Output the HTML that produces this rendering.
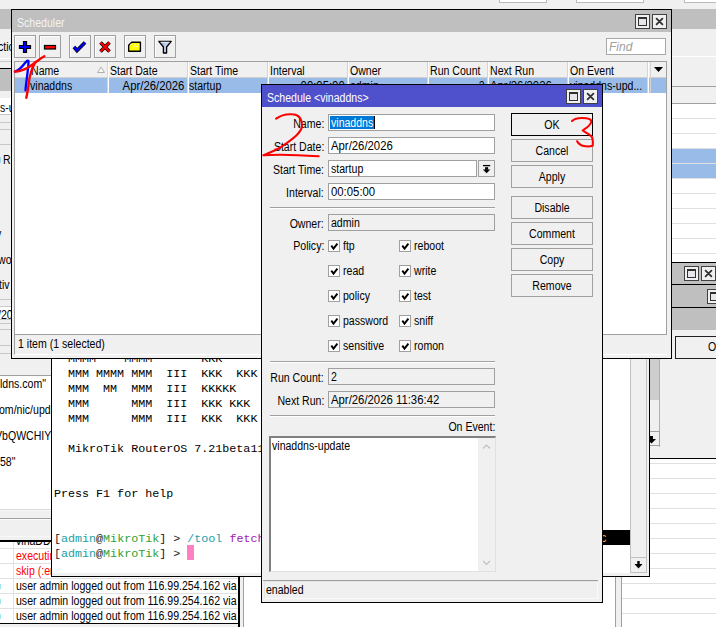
<!DOCTYPE html>
<html><head><meta charset="utf-8">
<style>
*{margin:0;padding:0;box-sizing:border-box}
html,body{width:716px;height:627px;overflow:hidden;background:#f0f0f0;font-family:"Liberation Sans",sans-serif;font-size:12px;color:#000}
.a{position:absolute}
.t{position:absolute;white-space:nowrap;line-height:14px;transform:scaleX(.88);transform-origin:0 0}
.tr{position:absolute;white-space:nowrap;line-height:14px;transform:scaleX(.88);transform-origin:100% 0;text-align:right}
.n{transform:scaleX(.945)!important}
.tc{position:absolute;white-space:nowrap;line-height:14px;transform:scaleX(.88);transform-origin:50% 0;text-align:center}
.win{position:absolute;border:1px solid #000;background:#f0f0f0}
.tb{position:absolute;background:#bfbfbf}
.tbtn{position:absolute;border:1px solid #a0a0a0;background:#f0f0f0;box-shadow:inset 1px 1px 0 #fff}
.fld{position:absolute;border:1px solid #a0a0a0;background:#fff}
.hsep{position:absolute;width:2px;border-left:1px solid #d5d5d5;border-right:1px solid #fff}
.tm{position:absolute;white-space:nowrap;font-family:"Liberation Mono",monospace;font-size:11.7px;line-height:15px}
svg{position:absolute;overflow:visible}
</style></head><body>

<!-- ===== background windows ===== -->
<div class="a" style="left:499px;top:0;width:48px;height:3px;background:#fff;border:1px solid #bbb;border-top:none"></div>
<div class="a" style="left:576px;top:0;width:68px;height:3px;background:#fff;border:1px solid #bbb;border-top:none"></div>
<div class="a" style="left:684px;top:0;width:40px;height:3px;background:#fff;border:1px solid #bbb;border-top:none"></div>

<!-- left behind windows (x 0-11) -->
<div class="a" style="left:0;top:9px;width:12px;height:20px;background:#bfbfbf"></div>
<div class="t" style="left:-2px;top:40px">ctio</div>
<div class="a" style="left:0;top:58px;width:12px;height:1px;background:#fff"></div>
<div class="a" style="left:0;top:61px;width:12px;height:1px;background:#c8c8c8"></div>
<div class="a" style="left:0;top:68px;width:12px;height:1px;background:#000"></div>
<div class="a" style="left:0;top:69px;width:12px;height:22px;background:#bfbfbf"></div>
<div class="a" style="left:0;top:98px;width:12px;height:17px;background:#fff;border-bottom:1px solid #c8c8c8"></div>
<div class="t" style="left:0;top:101px">s-u</div>
<div class="a" style="left:0;top:122px;width:12px;height:1px;background:#c8c8c8"></div>
<div class="a" style="left:0;top:129px;width:12px;height:1px;background:#c8c8c8"></div>
<div class="a" style="left:0;top:144px;width:12px;height:1px;background:#c8c8c8"></div>
<div class="t" style="left:3px;top:153px">R</div>
<div class="t" style="left:-4px;top:227px">v</div>
<div class="t" style="left:-2px;top:253px">wo</div>
<div class="t" style="left:-1px;top:278px">tiv</div>
<div class="a" style="left:0;top:299px;width:12px;height:1px;background:#c8c8c8"></div>
<div class="a" style="left:0;top:306px;width:12px;height:14px;background:#fff;border-top:1px solid #c8c8c8;border-bottom:1px solid #c8c8c8"></div>
<div class="t" style="left:-2px;top:308px">/20</div>
<div class="a" style="left:0;top:323px;width:12px;height:1px;background:#c8c8c8"></div>
<div class="a" style="left:0;top:329px;width:12px;height:1px;background:#c8c8c8"></div>
<div class="a" style="left:0;top:345px;width:12px;height:1px;background:#c8c8c8"></div>
<div class="a" style="left:0;top:353px;width:12px;height:1px;background:#c8c8c8"></div>

<!-- left text window (x 0-51, y 358-541) -->
<div class="a" style="left:0;top:375px;width:52px;height:1px;background:#a0a0a0"></div>
<div class="a" style="left:0;top:376px;width:52px;height:133px;background:#fff"></div>
<div class="a" style="left:0;top:509px;width:52px;height:1px;background:#d8d8d8"></div>
<div class="a" style="left:0;top:510px;width:52px;height:1px;background:#fafafa"></div>
<div class="a" style="left:0;top:519px;width:52px;height:1px;background:#fafafa"></div>
<div class="a" style="left:0;top:536px;width:52px;height:1px;background:#f8f8f8"></div>
<div class="a" style="left:0;top:518px;width:52px;height:1px;background:#a0a0a0"></div>
<div class="a" style="left:0;top:376px;width:51px;height:133px;overflow:hidden">
<div class="t" style="left:0;top:1px">ldns.com&quot;</div>
<div class="t" style="left:-1px;top:27px">om/nic/update</div>
<div class="t" style="left:-5px;top:53px">VbQWCHIYZ</div>
<div class="t" style="left:0;top:79px">58&quot;</div>
</div>
<div class="a" style="left:0;top:540px;width:52px;height:2px;background:#000"></div>

<!-- log window (x 0-239, y 541-624) -->
<div class="a" style="left:0;top:542px;width:239px;height:82px;background:#fff"></div>
<div class="a" style="left:13px;top:542px;width:1px;height:82px;background:#e0e0e0"></div>
<div class="a" style="left:0;top:548px;width:238px;height:1px;background:#e0e0e0"></div>
<div class="a" style="left:0;top:563px;width:238px;height:1px;background:#e0e0e0"></div>
<div class="a" style="left:0;top:578px;width:238px;height:1px;background:#e0e0e0"></div>
<div class="a" style="left:0;top:593px;width:238px;height:1px;background:#e0e0e0"></div>
<div class="a" style="left:0;top:608px;width:238px;height:1px;background:#e0e0e0"></div>
<div class="a" style="left:0;top:542px;width:238px;height:82px;overflow:hidden">
<div class="t" style="left:16px;top:-8px">vinaDDNS</div>
<div class="t" style="left:16px;top:7px;color:#ff0000">executing</div>
<div class="t" style="left:16px;top:22px;color:#ff0000">skip (:error</div>
<div class="t" style="left:16px;top:37px">user admin logged out from 116.99.254.162 via</div>
<div class="t" style="left:16px;top:52px">user admin logged out from 116.99.254.162 via</div>
<div class="t" style="left:16px;top:67px">user admin logged out from 116.99.254.162 via</div>
</div>
<div class="a" style="left:0;top:623px;width:239px;height:1px;background:#000"></div>
<div class="a" style="left:238px;top:576px;width:2px;height:51px;background:#000"></div>
<div class="a" style="left:243px;top:576px;width:1px;height:51px;background:#a0a0a0"></div>
<div class="a" style="left:244px;top:576px;width:18px;height:51px;background:#fff"></div>
<div class="a" style="left:261px;top:603px;width:342px;height:24px;background:#fff"></div>

<div class="a" style="left:0;top:584px;width:1px;height:5px;background:#9ee8f0"></div>
<div class="a" style="left:0;top:599px;width:1px;height:5px;background:#9ee8f0"></div>
<div class="a" style="left:0;top:614px;width:1px;height:5px;background:#9ee8f0"></div>
<div class="a" style="left:0;top:157px;width:1px;height:6px;background:#a0d8e8"></div>
<!-- right behind window (x 672-716, y 9-262) -->
<div class="a" style="left:672px;top:9px;width:44px;height:20px;background:#bfbfbf"></div>
<div class="a" style="left:672px;top:56px;width:44px;height:1px;background:#fff"></div>
<div class="a" style="left:672px;top:86px;width:44px;height:1px;background:#a0a0a0"></div>
<div class="a" style="left:672px;top:103px;width:44px;height:1px;background:#a0a0a0"></div>
<div class="a" style="left:672px;top:104px;width:44px;height:158px;background:#fff"></div>
<div class="a" style="left:672px;top:118px;width:44px;height:1px;background:#e0e0e0"></div>
<div class="a" style="left:672px;top:133px;width:44px;height:1px;background:#e0e0e0"></div>
<div class="a" style="left:672px;top:148px;width:44px;height:1px;background:#e0e0e0"></div>
<div class="a" style="left:672px;top:163px;width:44px;height:1px;background:#e0e0e0"></div>
<div class="a" style="left:672px;top:178px;width:44px;height:1px;background:#e0e0e0"></div>
<div class="a" style="left:672px;top:193px;width:44px;height:1px;background:#e0e0e0"></div>
<div class="a" style="left:672px;top:208px;width:44px;height:1px;background:#e0e0e0"></div>
<div class="a" style="left:672px;top:223px;width:44px;height:1px;background:#e0e0e0"></div>
<div class="a" style="left:672px;top:238px;width:44px;height:1px;background:#e0e0e0"></div>
<div class="a" style="left:672px;top:253px;width:44px;height:1px;background:#e0e0e0"></div>
<div class="a" style="left:672px;top:149px;width:44px;height:14px;background:#99bbe8"></div>
<div class="a" style="left:672px;top:164px;width:44px;height:14px;background:#99bbe8"></div>

<!-- stacked windows A/B/C (x 672-716, y 262-358) -->
<div class="a" style="left:672px;top:262px;width:44px;height:1px;background:#000"></div>
<div class="a" style="left:672px;top:263px;width:44px;height:21px;background:#bfbfbf"></div>
<div class="a" style="left:684px;top:266px;width:15px;height:15px;border:1px solid #404040;background:#f0f0f0"><div class="a" style="left:2px;top:2px;width:9px;height:9px;border:1px solid #303030;border-top-width:2px;background:#e8e6ea"></div></div>
<div class="a" style="left:701px;top:266px;width:15px;height:15px;border:1px solid #404040;background:#f0f0f0"><svg width="13" height="13" style="left:0;top:0"><path d="M3.6 3.6L9.4 9.4M9.4 3.6L3.6 9.4" stroke="#303030" stroke-width="1.8" stroke-linecap="round"/></svg></div>
<div class="a" style="left:672px;top:284px;width:44px;height:1px;background:#000"></div>
<div class="a" style="left:672px;top:285px;width:44px;height:22px;background:#bfbfbf"></div>
<div class="a" style="left:707px;top:289px;width:15px;height:15px;border:1px solid #404040;background:#f0f0f0"><div class="a" style="left:2px;top:2px;width:9px;height:9px;border:1px solid #303030;border-top-width:2px;background:#e8e6ea"></div></div>
<div class="a" style="left:672px;top:307px;width:44px;height:1px;background:#000"></div>
<div class="a" style="left:672px;top:308px;width:44px;height:22px;background:#bfbfbf"></div>
<div class="a" style="left:675px;top:336px;width:50px;height:23px;border:1px solid #202020;background:#f0f0f0"></div>
<div class="t" style="left:708px;top:340px">O</div>

<!-- terminal window (x 51-649, y ..576) -->
<div class="a" style="left:51px;top:300px;width:599px;height:277px;border:1px solid #000;background:#f0f0f0"></div>
<div class="a" style="left:52px;top:301px;width:578px;height:272px;background:#fff"></div>
<div class="a" style="left:630px;top:301px;width:17px;height:272px;background:#f0f0f0;border-left:1px solid #c0c0c0;border-right:1px solid #c0c0c0"></div>
<div class="a" style="left:631px;top:557px;width:15px;height:16px;border-top:1px solid #c0c0c0;border-bottom:1px solid #c0c0c0;background:#f0f0f0"><svg width="15" height="14" style="left:0;top:0"><path d="M7.5 3v3" stroke="#000" stroke-width="2.4"/><path d="M3.5 6h8l-4 4.5z" fill="#000"/></svg></div>
<div class="a" style="left:603px;top:530px;width:27px;height:15px;background:#000"></div>
<div class="t" style="left:601px;top:531px;color:#ffa040">c</div>
<div class="a" style="left:52px;top:301px;width:578px;height:275px;overflow:hidden">
<div class="tm" style="left:2px;top:50.8px">&nbsp;&nbsp;MMMM&nbsp;&nbsp;&nbsp;&nbsp;MMMM&nbsp;&nbsp;&nbsp;&nbsp;&nbsp;&nbsp;&nbsp;KKK</div>
<div class="tm" style="left:2px;top:65.8px">&nbsp;&nbsp;MMM&nbsp;MMMM&nbsp;MMM&nbsp;&nbsp;III&nbsp;&nbsp;KKK&nbsp;&nbsp;KKK&nbsp;&nbsp;RRRRRR&nbsp;&nbsp;&nbsp;&nbsp;&nbsp;OOOOOO&nbsp;&nbsp;&nbsp;&nbsp;&nbsp;&nbsp;TTT&nbsp;&nbsp;&nbsp;&nbsp;&nbsp;III&nbsp;&nbsp;KKK&nbsp;&nbsp;KKK</div>
<div class="tm" style="left:2px;top:80.8px">&nbsp;&nbsp;MMM&nbsp;&nbsp;MM&nbsp;&nbsp;MMM&nbsp;&nbsp;III&nbsp;&nbsp;KKKKK&nbsp;&nbsp;&nbsp;&nbsp;&nbsp;RRR&nbsp;&nbsp;RRR&nbsp;&nbsp;OOO&nbsp;&nbsp;OOO&nbsp;&nbsp;&nbsp;&nbsp;&nbsp;TTT&nbsp;&nbsp;&nbsp;&nbsp;&nbsp;III&nbsp;&nbsp;KKKKK</div>
<div class="tm" style="left:2px;top:95.8px">&nbsp;&nbsp;MMM&nbsp;&nbsp;&nbsp;&nbsp;&nbsp;&nbsp;MMM&nbsp;&nbsp;III&nbsp;&nbsp;KKK&nbsp;KKK&nbsp;&nbsp;&nbsp;RRRRRR&nbsp;&nbsp;&nbsp;&nbsp;OOO&nbsp;&nbsp;OOO&nbsp;&nbsp;&nbsp;&nbsp;&nbsp;TTT&nbsp;&nbsp;&nbsp;&nbsp;&nbsp;III&nbsp;&nbsp;KKK&nbsp;KKK</div>
<div class="tm" style="left:2px;top:110.8px">&nbsp;&nbsp;MMM&nbsp;&nbsp;&nbsp;&nbsp;&nbsp;&nbsp;MMM&nbsp;&nbsp;III&nbsp;&nbsp;KKK&nbsp;&nbsp;KKK&nbsp;&nbsp;RRR&nbsp;&nbsp;RRR&nbsp;&nbsp;&nbsp;OOOOOO&nbsp;&nbsp;&nbsp;&nbsp;&nbsp;&nbsp;TTT&nbsp;&nbsp;&nbsp;&nbsp;&nbsp;III&nbsp;&nbsp;KKK&nbsp;&nbsp;KKK</div>
<div class="tm" style="left:2px;top:140.8px">&nbsp;&nbsp;MikroTik&nbsp;RouterOS&nbsp;7.21beta11&nbsp;(c)&nbsp;1999-2025&nbsp;&nbsp;&nbsp;&nbsp;&nbsp;&nbsp;&nbsp;www.mikrotik.com</div>
<div class="tm" style="left:2px;top:185.8px">Press&nbsp;F1&nbsp;for&nbsp;help</div>
<div class="tm" style="left:2px;top:230.8px"><span style="color:#202020">[</span><span style="color:#20a0a0">admin</span><span style="color:#202020">@</span><span style="color:#30a030">MikroTik</span><span style="color:#202020">]&nbsp;&gt;&nbsp;</span><span style="color:#20a0b0">/tool</span>&nbsp;<span style="color:#a020b0">fetch</span></div>
<div class="tm" style="left:2px;top:245.8px"><span style="color:#202020">[</span><span style="color:#20a0a0">admin</span><span style="color:#202020">@</span><span style="color:#30a030">MikroTik</span><span style="color:#202020">]&nbsp;&gt;&nbsp;</span></div>
</div>
<div class="a" style="left:187px;top:545px;width:7px;height:15px;background:#ff80c0"></div>

<!-- right-lower window (x 649-716, y 358-458) -->
<div class="a" style="left:650px;top:358px;width:10px;height:89px;border-right:1px solid #b0b0b0;background:#f0f0f0"></div>
<div class="a" style="left:650px;top:358px;width:9px;height:42px;background:#cdcdcd"></div>
<div class="a" style="left:650px;top:431px;width:10px;height:15px;border:1px solid #a0a0a0;border-left:none;background:#f0f0f0"><svg width="10" height="14" style="left:0;top:0"><path d="M0 4h3v3h3l-4.5 4.5l-2-2z" fill="#000"/></svg></div>
<div class="a" style="left:649px;top:458px;width:67px;height:1px;background:#000"></div>

<!-- lower-right table window (x 615-716, y 458-627) -->
<div class="a" style="left:650px;top:459px;width:66px;height:168px;background:#fff"></div>
<div class="a" style="left:603px;top:577px;width:113px;height:50px;background:#fff"></div>
<div class="a" style="left:615px;top:577px;width:7px;height:50px;background:#f0f0f0;border-left:1px solid #a0a0a0;border-right:1px solid #a0a0a0"></div>
<div class="a" style="left:650px;top:463px;width:66px;height:1px;background:#e0e0e0"></div>
<div class="a" style="left:650px;top:478px;width:66px;height:1px;background:#e0e0e0"></div>
<div class="a" style="left:650px;top:493px;width:66px;height:1px;background:#e0e0e0"></div>
<div class="a" style="left:650px;top:508px;width:66px;height:1px;background:#e0e0e0"></div>
<div class="a" style="left:650px;top:523px;width:66px;height:1px;background:#e0e0e0"></div>
<div class="a" style="left:650px;top:538px;width:66px;height:1px;background:#e0e0e0"></div>
<div class="a" style="left:650px;top:553px;width:66px;height:1px;background:#e0e0e0"></div>
<div class="a" style="left:650px;top:568px;width:66px;height:1px;background:#e0e0e0"></div>
<div class="a" style="left:622px;top:583px;width:94px;height:1px;background:#e0e0e0"></div>
<div class="a" style="left:622px;top:598px;width:94px;height:1px;background:#e0e0e0"></div>
<div class="a" style="left:622px;top:613px;width:94px;height:1px;background:#e0e0e0"></div>

<!-- ===== Scheduler window ===== -->
<div class="win" style="left:11px;top:9px;width:661px;height:350px"></div>
<div class="tb" style="left:12px;top:10px;width:659px;height:22px"></div>
<div class="t" style="left:17px;top:16px;color:#f4f4f4">Scheduler</div>
<!-- title buttons -->
<div class="a" style="left:635px;top:14px;width:15px;height:15px;border:1px solid #404040;background:#f0f0f0"><div class="a" style="left:2px;top:2px;width:9px;height:9px;border:1px solid #303030;border-top-width:2px;background:#e8e6ea"></div></div>
<div class="a" style="left:652px;top:14px;width:15px;height:15px;border:1px solid #404040;background:#f0f0f0"><svg width="13" height="13" style="left:0;top:0"><path d="M3.6 3.6L9.4 9.4M9.4 3.6L3.6 9.4" stroke="#303030" stroke-width="1.8" stroke-linecap="round"/></svg></div>

<!-- toolbar buttons -->
<div class="tbtn" style="left:14px;top:35px;width:22px;height:23px"><svg width="20" height="21" style="left:0;top:0"><path d="M8.5 5.5h3v4h4v3h-4v4h-3v-4h-4v-3h4z" fill="#0000ff" stroke="#000" stroke-width="1.2"/></svg></div>
<div class="tbtn" style="left:39px;top:35px;width:22px;height:23px"><svg width="20" height="21" style="left:0;top:0"><rect x="4.5" y="9.5" width="11" height="3.5" fill="#ff0000" stroke="#000" stroke-width="1.2"/></svg></div>
<div class="tbtn" style="left:69px;top:35px;width:22px;height:23px"><svg width="20" height="21" style="left:0;top:0"><path d="M4 11l3 3.5 8-8" fill="none" stroke="#000" stroke-width="3.6"/><path d="M4 11l3 3.5 8-8" fill="none" stroke="#0000ff" stroke-width="2"/></svg></div>
<div class="tbtn" style="left:94px;top:35px;width:22px;height:23px"><svg width="20" height="21" style="left:0;top:0"><path d="M5.5 6.5l9 9M14.5 6.5l-9 9" fill="none" stroke="#000" stroke-width="3.6"/><path d="M5.5 6.5l9 9M14.5 6.5l-9 9" fill="none" stroke="#ff0000" stroke-width="2.2"/></svg></div>
<div class="tbtn" style="left:124px;top:35px;width:22px;height:23px"><svg width="20" height="21" style="left:0;top:0"><path d="M3.7 9.2L6.7 6.2H15.4V15.3H3.7Z" fill="#ffff00" stroke="#000" stroke-width="1.4" stroke-linejoin="round"/><path d="M9 8.6h6M8 10.6h7" stroke="#fff" stroke-width="0.9" stroke-dasharray="2 1.2" opacity=".8"/><rect x="5.2" y="7.8" width="1" height="1" fill="#fff"/></svg></div>
<div class="tbtn" style="left:154px;top:35px;width:22px;height:23px"><svg width="20" height="21" style="left:0;top:0"><defs><linearGradient id="fg" x1="0" x2="1"><stop offset="0" stop-color="#8898d8"/><stop offset=".6" stop-color="#c8d4f4"/><stop offset="1" stop-color="#9aa8e0"/></linearGradient></defs><path d="M3.8 5.4H16.2L11.6 11V17H8.4V11Z" fill="url(#fg)" stroke="#000" stroke-width="1.3" stroke-linejoin="round"/><path d="M5.5 6.2H14.5" stroke="#fff" stroke-width="0.8"/></svg></div>

<!-- find -->
<div class="fld" style="left:606px;top:38px;width:60px;height:17px;border-color:#a8a8a8"></div>
<div class="t" style="left:609px;top:40px;color:#a0a0a0;font-style:italic;transform:none">Find</div>

<!-- list -->
<div class="a" style="left:14px;top:61px;width:653px;height:274px;background:#fff;border:1px solid #a0a0a0;border-bottom:none"></div>
<div class="a" style="left:15px;top:62px;width:651px;height:16px;background:#f0f0f0"></div>
<div class="a" style="left:15px;top:77px;width:651px;height:1px;background:#d0d0d0"></div>
<div class="a" style="left:15px;top:78px;width:651px;height:15px;background:#99bbe8"></div>
<div class="hsep" style="left:107px;top:62px;height:31px"></div>
<div class="hsep" style="left:187px;top:62px;height:31px"></div>
<div class="hsep" style="left:267px;top:62px;height:31px"></div>
<div class="hsep" style="left:347px;top:62px;height:31px"></div>
<div class="hsep" style="left:427px;top:62px;height:31px"></div>
<div class="hsep" style="left:487px;top:62px;height:31px"></div>
<div class="hsep" style="left:567px;top:62px;height:31px"></div>
<div class="hsep" style="left:647px;top:62px;height:31px"></div>
<div class="hsep" style="left:650px;top:62px;height:31px;border-right:none"></div>
<svg width="14" height="14" style="left:93px;top:66px"><path d="M4.5 6.5l3.5-5.5 3.5 5.5z" fill="#f8f8f8" stroke="#b0b0b0" stroke-width="1"/></svg>
<svg width="16" height="16" style="left:651px;top:62px"><path d="M3 5h9l-4.5 5z" fill="#000"/></svg>
<div class="t" style="left:31px;top:64px">Name</div>
<div class="t" style="left:110px;top:64px">Start Date</div>
<div class="t" style="left:190px;top:64px">Start Time</div>
<div class="t" style="left:270px;top:64px">Interval</div>
<div class="t" style="left:350px;top:64px">Owner</div>
<div class="t" style="left:430px;top:64px">Run Count</div>
<div class="t" style="left:490px;top:64px">Next Run</div>
<div class="t" style="left:570px;top:64px">On Event</div>

<div class="t" style="left:30px;top:79px">vinaddns</div>
<div class="tr n" style="right:532px;top:79px">Apr/26/2026</div>
<div class="t" style="left:189px;top:79px">startup</div>
<div class="tr n" style="right:371px;top:79px">00:05:00</div>
<div class="t" style="left:350px;top:79px">admin</div>
<div class="tr" style="right:231px;top:79px">2</div>
<div class="a" style="left:488px;top:78px;width:79px;height:15px;overflow:hidden"><div class="t n" style="left:2px;top:1px">Apr/26/2026</div></div>
<div class="t" style="left:570px;top:79px">vinaddns-upd...</div>

<!-- status bar -->
<div class="a" style="left:14px;top:334px;width:653px;height:21px;border-top:1px solid #a0a0a0;border-left:1px solid #a0a0a0;border-bottom:1px solid #fff;background:#f0f0f0"></div>
<div class="t" style="left:18px;top:337px">1 item (1 selected)</div>

<!-- ===== Schedule dialog ===== -->
<div class="win" style="left:261px;top:84px;width:342px;height:519px"></div>
<div class="a" style="left:262px;top:85px;width:340px;height:22px;background:#4f50cb"></div>
<div class="t" style="left:267px;top:91px;color:#fff">Schedule &lt;vinaddns&gt;</div>
<div class="a" style="left:566px;top:89px;width:15px;height:15px;border:1px solid #404040;background:#f0f0f0"><div class="a" style="left:2px;top:2px;width:9px;height:9px;border:1px solid #303030;border-top-width:2px;background:#e8e6ea"></div></div>
<div class="a" style="left:583px;top:89px;width:15px;height:15px;border:1px solid #404040;background:#f0f0f0"><svg width="13" height="13" style="left:0;top:0"><path d="M3.6 3.6L9.4 9.4M9.4 3.6L3.6 9.4" stroke="#303030" stroke-width="1.8" stroke-linecap="round"/></svg></div>

<!-- labels -->
<div class="tr" style="right:392px;top:117px">Name:</div>
<div class="tr" style="right:392px;top:140px">Start Date:</div>
<div class="tr" style="right:392px;top:163px">Start Time:</div>
<div class="tr" style="right:392px;top:186px">Interval:</div>
<div class="tr" style="right:392px;top:217px">Owner:</div>
<div class="tr" style="right:392px;top:239px">Policy:</div>
<div class="tr" style="right:392px;top:371px">Run Count:</div>
<div class="tr" style="right:392px;top:394px">Next Run:</div>
<div class="tr" style="right:221px;top:420px">On Event:</div>

<!-- fields -->
<div class="fld" style="left:328px;top:114px;width:167px;height:17px"></div>
<div class="a" style="left:330px;top:116px;width:45px;height:13px;background:#0078d7"></div>
<div class="a" style="left:374px;top:116px;width:1px;height:13px;background:#000"></div>
<div class="t" style="left:331px;top:116px;color:#fff">vinaddns</div>
<div class="fld" style="left:328px;top:137px;width:167px;height:17px"></div>
<div class="t n" style="left:331px;top:139px">Apr/26/2026</div>
<div class="fld" style="left:328px;top:160px;width:149px;height:17px"></div>
<div class="t" style="left:331px;top:162px">startup</div>
<div class="a" style="left:478px;top:160px;width:17px;height:17px;border:1px solid #a0a0a0;background:#f0f0f0"><svg width="15" height="15" style="left:0;top:0"><path d="M4 4.6h7.2" stroke="#000" stroke-width="1.3"/><rect x="6.1" y="6.2" width="3" height="2.6" fill="#000"/><path d="M3.9 8.4h7.4l-3.7 3.8z" fill="#000"/></svg></div>
<div class="fld" style="left:328px;top:183px;width:167px;height:17px"></div>
<div class="t n" style="left:331px;top:185px">00:05:00</div>
<div class="a" style="left:270px;top:207px;width:225px;height:2px;border-top:1px solid #a0a0a0;border-bottom:1px solid #fff"></div>
<div class="fld" style="left:328px;top:214px;width:167px;height:17px;background:#f0f0f0"></div>
<div class="t" style="left:331px;top:216px">admin</div>

<!-- checkboxes -->
<div class="a" style="left:328px;top:240px;width:12px;height:12px;border:1px solid #a0a0a0;background:#fff"><svg width="10" height="10" style="left:0;top:0"><path d="M2.3 4.6L4.5 7.6L8.4 2.6" fill="none" stroke="#000" stroke-width="1.9"/></svg></div>
<div class="t" style="left:343px;top:239px">ftp</div>
<div class="a" style="left:399px;top:240px;width:12px;height:12px;border:1px solid #a0a0a0;background:#fff"><svg width="10" height="10" style="left:0;top:0"><path d="M2.3 4.6L4.5 7.6L8.4 2.6" fill="none" stroke="#000" stroke-width="1.9"/></svg></div>
<div class="t" style="left:414px;top:239px">reboot</div>
<div class="a" style="left:328px;top:265px;width:12px;height:12px;border:1px solid #a0a0a0;background:#fff"><svg width="10" height="10" style="left:0;top:0"><path d="M2.3 4.6L4.5 7.6L8.4 2.6" fill="none" stroke="#000" stroke-width="1.9"/></svg></div>
<div class="t" style="left:343px;top:264px">read</div>
<div class="a" style="left:399px;top:265px;width:12px;height:12px;border:1px solid #a0a0a0;background:#fff"><svg width="10" height="10" style="left:0;top:0"><path d="M2.3 4.6L4.5 7.6L8.4 2.6" fill="none" stroke="#000" stroke-width="1.9"/></svg></div>
<div class="t" style="left:414px;top:264px">write</div>
<div class="a" style="left:328px;top:290px;width:12px;height:12px;border:1px solid #a0a0a0;background:#fff"><svg width="10" height="10" style="left:0;top:0"><path d="M2.3 4.6L4.5 7.6L8.4 2.6" fill="none" stroke="#000" stroke-width="1.9"/></svg></div>
<div class="t" style="left:343px;top:289px">policy</div>
<div class="a" style="left:399px;top:290px;width:12px;height:12px;border:1px solid #a0a0a0;background:#fff"><svg width="10" height="10" style="left:0;top:0"><path d="M2.3 4.6L4.5 7.6L8.4 2.6" fill="none" stroke="#000" stroke-width="1.9"/></svg></div>
<div class="t" style="left:414px;top:289px">test</div>
<div class="a" style="left:328px;top:315px;width:12px;height:12px;border:1px solid #a0a0a0;background:#fff"><svg width="10" height="10" style="left:0;top:0"><path d="M2.3 4.6L4.5 7.6L8.4 2.6" fill="none" stroke="#000" stroke-width="1.9"/></svg></div>
<div class="t" style="left:343px;top:314px">password</div>
<div class="a" style="left:399px;top:315px;width:12px;height:12px;border:1px solid #a0a0a0;background:#fff"><svg width="10" height="10" style="left:0;top:0"><path d="M2.3 4.6L4.5 7.6L8.4 2.6" fill="none" stroke="#000" stroke-width="1.9"/></svg></div>
<div class="t" style="left:414px;top:314px">sniff</div>
<div class="a" style="left:328px;top:340px;width:12px;height:12px;border:1px solid #a0a0a0;background:#fff"><svg width="10" height="10" style="left:0;top:0"><path d="M2.3 4.6L4.5 7.6L8.4 2.6" fill="none" stroke="#000" stroke-width="1.9"/></svg></div>
<div class="t" style="left:343px;top:339px">sensitive</div>
<div class="a" style="left:399px;top:340px;width:12px;height:12px;border:1px solid #a0a0a0;background:#fff"><svg width="10" height="10" style="left:0;top:0"><path d="M2.3 4.6L4.5 7.6L8.4 2.6" fill="none" stroke="#000" stroke-width="1.9"/></svg></div>
<div class="t" style="left:414px;top:339px">romon</div>

<div class="a" style="left:270px;top:361px;width:225px;height:2px;border-top:1px solid #a0a0a0;border-bottom:1px solid #fff"></div>
<div class="fld" style="left:328px;top:368px;width:167px;height:17px;background:#f0f0f0"></div>
<div class="t" style="left:331px;top:370px">2</div>
<div class="fld" style="left:328px;top:391px;width:167px;height:17px;background:#f0f0f0"></div>
<div class="t n" style="left:331px;top:393px">Apr/26/2026 11:36:42</div>
<div class="a" style="left:270px;top:415px;width:225px;height:2px;border-top:1px solid #a0a0a0;border-bottom:1px solid #fff"></div>

<!-- on event text area -->
<div class="a" style="left:269px;top:436px;width:227px;height:136px;background:#fff;border-top:2px solid #808080;border-left:2px solid #808080;border-right:1px solid #e0e0e0;border-bottom:1px solid #e0e0e0"></div>
<div class="a" style="left:478px;top:438px;width:17px;height:133px;background:#f0f0f0"></div>
<svg width="17" height="134" style="left:478px;top:438px"><path d="M5 10.5l3.5-3.5 3.5 3.5" fill="none" stroke="#c0c0c0" stroke-width="1.2"/><path d="M5 123l3.5 3.5 3.5-3.5" fill="none" stroke="#c0c0c0" stroke-width="1.2"/></svg>
<div class="t" style="left:272px;top:439px">vinaddns-update</div>

<!-- buttons -->
<div class="a" style="left:511px;top:113px;width:82px;height:23px;border:1px solid #000;background:#f0f0f0"></div>
<div class="tc" style="left:511px;top:118px;width:82px">OK</div>
<div class="a" style="left:511px;top:139px;width:82px;height:23px;border:1px solid #a0a0a0;background:#f0f0f0"></div>
<div class="tc" style="left:511px;top:144px;width:82px">Cancel</div>
<div class="a" style="left:511px;top:165px;width:82px;height:23px;border:1px solid #a0a0a0;background:#f0f0f0"></div>
<div class="tc" style="left:511px;top:170px;width:82px">Apply</div>
<div class="a" style="left:511px;top:196px;width:82px;height:23px;border:1px solid #a0a0a0;background:#f0f0f0"></div>
<div class="tc" style="left:511px;top:201px;width:82px">Disable</div>
<div class="a" style="left:511px;top:222px;width:82px;height:23px;border:1px solid #a0a0a0;background:#f0f0f0"></div>
<div class="tc" style="left:511px;top:227px;width:82px">Comment</div>
<div class="a" style="left:511px;top:248px;width:82px;height:23px;border:1px solid #a0a0a0;background:#f0f0f0"></div>
<div class="tc" style="left:511px;top:253px;width:82px">Copy</div>
<div class="a" style="left:511px;top:274px;width:82px;height:23px;border:1px solid #a0a0a0;background:#f0f0f0"></div>
<div class="tc" style="left:511px;top:279px;width:82px">Remove</div>

<!-- status -->
<div class="a" style="left:263px;top:580px;width:335px;height:1px;background:#a0a0a0"></div>
<div class="a" style="left:264px;top:581px;width:334px;height:18px;border-top:1px solid #e4e4e4;border-left:1px solid #e4e4e4;border-bottom:1px solid #fafafa;border-right:1px solid #fafafa"></div>
<div class="t" style="left:266px;top:583px">enabled</div>

<!-- annotations -->
<svg width="716" height="627" style="left:0;top:0" fill="none" stroke-linecap="round" stroke-linejoin="round">
<path d="M15.2 71.5C18 70.5 22 67 25 63C27 60.5 28.6 59.5 28.5 62C28.3 70 26 82 25.5 90.3" stroke="#0000ff" stroke-width="2.3"/>
<path d="M14.8 71.5C18 72 22 70.5 26 68.7C30 66.5 34 63.6 38 60.5C40.5 58.5 42.5 57.2 44.3 56.2" stroke="#ff0000" stroke-width="2.4"/>
<path d="M35.5 62C32 68 29.5 76 28.7 83.5S27 94 26.3 97.8" stroke="#ff0000" stroke-width="2.4"/>
<path d="M276.1 118.7C281 115 288 114 292.3 114.3C298 114.5 302 118 302 126.5C301 132 296 137 279.5 148C272 152 266 154 263.4 155.3C280 154 300 155 318.7 156.3" stroke="#ff0000" stroke-width="2.1"/>
<path d="M572 121C575 118 580 117.5 586.3 118.2C590 118.8 592 120 591.1 122.5C590 126 586 128 582.7 130.5C586 133 591 135 592.3 137.7C593 141 593 144 592.7 145.7C590 146.5 586 146.5 584 146C580 145.5 578 143 577.1 141.3" stroke="#ff0000" stroke-width="2.1"/>
</svg>
</body></html>
